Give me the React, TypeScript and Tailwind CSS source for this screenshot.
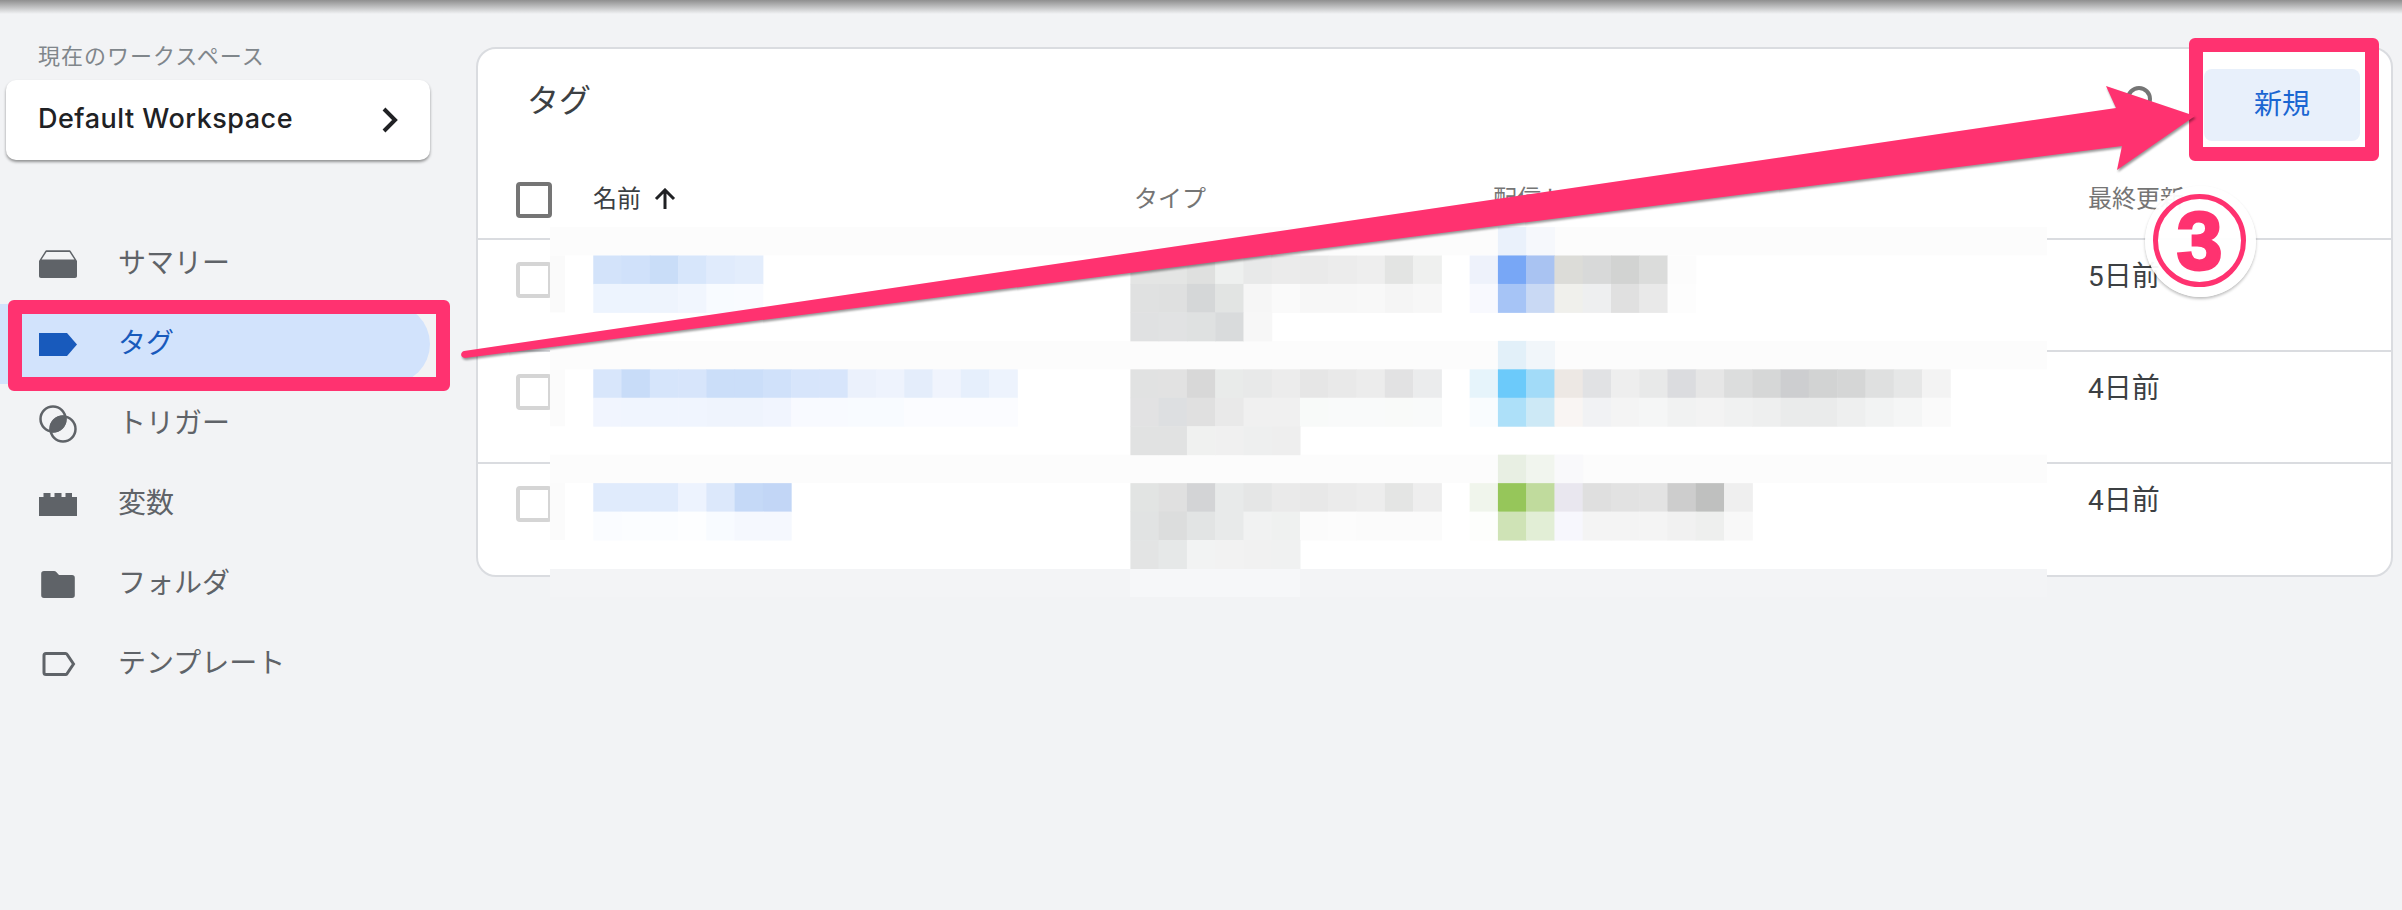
import React from 'react';

// Mosaic cell geometry: x = 565 + 28.27 * k, y = 227 + 28.46 * r (origin moved to overlay at 550,227)
const CELL_W = 28.27;
const CELL_H = 28.46;

type Run = [r: number, k: number, colors: string[]];

const mosaic: Run[] = [
  // faint strips above every row
  [0, 33, ['#eaf1fb', '#f6f8fc']],
  [4, 33, ['#e2f0f9', '#f1f6fa']],
  [8, 33, ['#e8efe3', '#f1f5ee', '#f9f9fb']],
  // tag names
  [1, 1, ['#d3e3fa', '#d0e1fa', '#c9ddf8', '#d7e6fb', '#e0ebfc', '#e3edfc']],
  [2, 1, ['#edf4fe', '#edf4fe', '#eef4fd', '#f1f6fe', '#f8fbff', '#f9fbff']],
  [5, 1, ['#d8e6fb', '#c8dcf8', '#d6e5fb', '#d7e5fb', '#cbdef9', '#cbdef9', '#d0e1fa', '#d7e5fb', '#d7e5fb', '#ebf1fc', '#eef3fd', '#e4edfb', '#f0f4fd', '#e6effc', '#edf3fd']],
  [6, 1, ['#f1f5fe', '#f0f5fe', '#f0f5fe', '#f0f5fe', '#eff4fd', '#eff4fd', '#f1f5fe', '#f8faff', '#f8faff', '#f8fbff', '#f8fbff', '#fbfcff', '#fbfcff', '#fbfcff', '#fbfcff']],
  [9, 1, ['#e0ebfc', '#e0ebfc', '#e0ebfc', '#edf3fe', '#dce8fb', '#c5d9f7', '#c2d6f6']],
  [10, 1, ['#fafcff', '#fbfdff', '#fbfdff', '#fdfeff', '#f8fbff', '#f5f8fe', '#f5f8fe']],
  // tag types
  [1, 20, ['#e4e5e4', '#e4e5e4', '#dfe0df', '#eef0ef', '#e8e9e9', '#ebebeb', '#eaeaea', '#ececec', '#eeeeee', '#e3e4e3', '#eff0ef']],
  [2, 20, ['#e0e1e1', '#dfe0e0', '#d5d7d8', '#e2e4e3', '#f6f6f6', '#fafafa', '#f7f7f7', '#f7f7f7', '#f8f8f8', '#f5f5f5', '#f7f7f7']],
  [3, 20, ['#e0e1e2', '#e1e2e3', '#dfe1e1', '#d9dbdc', '#f7f7f7']],
  [5, 20, ['#e1e2e2', '#e2e2e2', '#d8d8d8', '#e9ebea', '#e8e9e9', '#ececec', '#e6e6e6', '#e9e9e9', '#ececec', '#e2e2e3', '#ebeced']],
  [6, 20, ['#e2e2e3', '#dddfe1', '#e0e0e0', '#e9e9e9', '#f0f0f0', '#f0f0f0', '#f8faf9', '#f9fafa', '#f9fafa', '#f9faf9', '#f9fafa']],
  [7, 20, ['#e1e2e2', '#e1e2e2', '#f0f1f0', '#f0f0f0', '#eeefef', '#eeeeee']],
  [9, 20, ['#e2e4e3', '#e0e0e0', '#d3d4d6', '#e8eaea', '#e5e6e6', '#eaeaea', '#e8e8e8', '#ebebeb', '#ededed', '#e4e5e4', '#eeeeee']],
  [10, 20, ['#e1e3e3', '#dcdddd', '#e2e4e4', '#e8eaea', '#f1f2f2', '#eff1f0', '#fbfbfb', '#fcfcfc', '#fbfbfb', '#fbfbfb', '#fbfbfb']],
  [11, 20, ['#e3e4e4', '#e6e8e8', '#f2f3f3', '#f2f2f2', '#f1f1f1', '#f0f1f1']],
  // firing triggers
  [1, 32, ['#eef2fb', '#78a7f6', '#a9c3f2', '#dcdcd8', '#d8d9d9', '#d2d3d2', '#dbdcdb', '#fcfcfc']],
  [2, 32, ['#f8f9fe', '#a6c4f6', '#c9d9f4', '#f0f0ec', '#eeeff0', '#e0e0e0', '#e9e9e9', '#fdfdfd']],
  [5, 32, ['#e6f4fb', '#6ccafa', '#a2dbf8', '#ede8e4', '#e1e2e4', '#eeeeee', '#e8e9e9', '#dbdcdf', '#e6e6e6', '#dcdddd', '#d6d7d7', '#cdced0', '#d2d3d3', '#d5d6d6', '#dfe0e0', '#e6e7e7', '#f3f3f3']],
  [6, 32, ['#f9fcfe', '#ade0f9', '#cde9f6', '#f9f5f3', '#f1f2f4', '#f4f4f4', '#f5f6f6', '#f1f2f2', '#f3f3f3', '#f0f1f1', '#eeefef', '#eaebeb', '#eaebeb', '#eeefef', '#f2f3f3', '#f5f6f6', '#fafafa']],
  [9, 32, ['#f0f5ec', '#96c65a', '#c0db9d', '#e9e7ef', '#dfdfdf', '#e2e2e2', '#e3e3e3', '#cdcdcd', '#bfc0bf', '#efefef']],
  [10, 32, ['#fdfefc', '#cfe3b6', '#e2eed6', '#f7f7fd', '#f4f4f4', '#f4f4f4', '#f4f4f4', '#f1f1f1', '#eeefee', '#f8f8f8']],
];

function Mosaic() {
  return (
    <svg className="absolute left-[550px] top-[227px]" width={1497} height={370}>
      <rect x={0} y={0} width={1497} height={342} fill="#ffffff" />
      <rect x={0} y={342} width={1497} height={28} fill="#f3f4f6" />
      <rect x={580} y={342} width={170} height={28} fill="#f6f7f9" />
      {[0, 4, 8].map(r => (
        <rect key={r} x={0} y={r * CELL_H} width={1497} height={CELL_H} fill="#fcfcfc" />
      ))}
      <rect x={0} y={CELL_H} width={15} height={CELL_H * 2} fill="#fafafa" />
      <rect x={0} y={CELL_H * 5} width={15} height={CELL_H * 2} fill="#fbfbfb" />
      <rect x={0} y={CELL_H * 9} width={15} height={CELL_H * 2} fill="#fbfbfb" />
      {mosaic.map(([r, k, colors]) =>
        colors.map((c, i) => (
          <rect
            key={`${r}-${k}-${i}`}
            x={15 + (k + i) * CELL_W}
            y={r * CELL_H}
            width={CELL_W + 0.5}
            height={CELL_H + 0.5}
            fill={c}
          />
        )),
      )}
    </svg>
  );
}

function SummaryIcon() {
  return (
    <svg width="38" height="28" viewBox="0 0 38 28" fill="#5f6368">
      <path d="M0 11 6 1.5C6.4.7 7 .3 8 .3h22c1 0 1.600.4 2 1.200L38 11v15c0 1.200-.8 2-2 2H2c-1.200 0-2-.8-2-2V11Zm2.600-1.500h32.800L30.500 2h-23L2.600 9.500Z" fillRule="evenodd" />
    </svg>
  );
}

function TagIcon() {
  return (
    <svg width="38" height="23" viewBox="0 0 38 23" fill="#185abc">
      <path d="M0 0h28l10 11.500L28 23H0Z" />
    </svg>
  );
}

function TriggerIcon() {
  return (
    <svg width="38" height="38" viewBox="0 0 38 38" fill="none">
      <defs>
        <clipPath id="trigger-lens">
          <circle cx="14" cy="14" r="13.500" />
        </clipPath>
      </defs>
      <circle cx="24" cy="24" r="13.500" fill="#5f6368" clipPath="url(#trigger-lens)" />
      <circle cx="14" cy="14" r="12.500" stroke="#5f6368" strokeWidth="2.500" />
      <circle cx="24" cy="24" r="12.500" stroke="#5f6368" strokeWidth="2.500" />
    </svg>
  );
}

function VariableIcon() {
  return (
    <svg width="38" height="23" viewBox="0 0 38 23" fill="#5f6368">
      <path d="M0 4h4.500V0h7v4h4V0h7v4h4V0h6.500v4H38v19H0Z" />
    </svg>
  );
}

function FolderIcon() {
  return (
    <svg width="38" height="27" viewBox="0 0 38 27" fill="#5f6368">
      <path d="M5 0h10c1 0 1.700.4 2.300 1l2.700 3h13c1.800 0 2.800 1 2.800 2.800v17.400c0 1.800-1 2.800-2.800 2.800H5c-1.800 0-2.800-1-2.800-2.800V2.800C2.200 1 3.200 0 5 0Z" />
    </svg>
  );
}

function TemplateIcon() {
  return (
    <svg width="38" height="24" viewBox="0 0 38 24" fill="none">
      <path d="M7 1.500h19.500c.6 0 1.200.3 1.500.8l6.500 9.700-6.500 9.700c-.3.500-.9.800-1.500.8H7c-1.200 0-2-.8-2-2V3.500c0-1.200.8-2 2-2Z" stroke="#5f6368" strokeWidth="3" />
    </svg>
  );
}

const navItems = [
  { label: 'サマリー', icon: <SummaryIcon /> },
  { label: 'タグ', icon: <TagIcon />, active: true },
  { label: 'トリガー', icon: <TriggerIcon /> },
  { label: '変数', icon: <VariableIcon /> },
  { label: 'フォルダ', icon: <FolderIcon /> },
  { label: 'テンプレート', icon: <TemplateIcon /> },
];

function Sidebar() {
  return (
    <aside className="w-[476px] shrink-0">
      <div className="pl-[38px] pt-[28px] text-[22px] leading-[30px] tracking-[1px] text-[#80868b]">現在のワークスペース</div>
      <div className="ml-[6px] mt-[8px] flex h-[80px] w-[424px] items-center justify-between rounded-[10px] bg-white pl-[32px] pr-[32px] shadow-[0_2px_3px_rgba(0,0,0,0.4)]">
        <span className="-mt-[1px] font-['Inter',sans-serif] text-[27px] font-medium tracking-[0.5px] text-[#202124]">Default Workspace</span>
        <svg width="16" height="26" viewBox="0 0 16 26" fill="none">
          <path d="M2 2l11 11L2 24" stroke="#202124" strokeWidth="4" />
        </svg>
      </div>
      <nav className="mt-[64px]">
        {navItems.map(item => (
          <div
            key={item.label}
            className={`flex h-[80px] w-[430px] items-center rounded-r-[40px] pl-[39px] ${item.active ? 'bg-[#d2e3fc] text-[#185abc]' : 'text-[#5f6368]'}`}
          >
            <span className="flex w-[79px] shrink-0 items-center">{item.icon}</span>
            <span className="-mt-[1px] text-[28px] leading-none">{item.label}</span>
          </div>
        ))}
      </nav>
    </aside>
  );
}

function Checkbox({ dark }: { dark?: boolean }) {
  return <div className={`h-[36px] w-[36px] rounded-[4px] border-[4px] ${dark ? 'border-[#757575]' : 'border-[#d5d5d5]'}`} />;
}

const gridCols = 'grid grid-cols-[115px_541px_359px_595px_1fr]';

function TagTable() {
  return (
    <section className="mr-[9px] mt-[33px] h-[530px] flex-1 rounded-[20px] border-2 border-[#dadce0] bg-white">
      <div className="flex h-[112px] items-center justify-between pl-[49px] pr-[31px]">
        <h1 className="-mt-[9px] text-[32px] font-normal text-[#3c4043]">タグ</h1>
        <div className="flex items-center gap-[49px]">
          <svg width="30" height="40" viewBox="0 0 30 40" fill="none">
            <circle cx="14" cy="14" r="11" stroke="#757575" strokeWidth="4" />
          </svg>
          <button className="h-[72px] w-[156px] rounded-[8px] bg-[#e8f0fb] text-[28px] text-[#1a66d2]">新規</button>
        </div>
      </div>
      <div className={`${gridCols} h-[77px] text-[24px]`}>
        <div className="pl-[38px] pt-[21px]">
          <Checkbox dark />
        </div>
        <div className="flex items-center gap-[13px] pb-[2px] text-[#3c4043]">
          名前
          <svg width="22" height="22" viewBox="0 0 22 22" fill="none">
            <path d="M11 21V2M2 11l9-9 9 9" stroke="#202124" strokeWidth="3" />
          </svg>
        </div>
        <div className="flex items-center pb-[2px] text-[#757575]">タイプ</div>
        <div className="flex items-center pb-[2px] text-[#757575]">配信トリガー</div>
        <div className="flex items-center pb-[2px] text-[#757575]">最終更新</div>
      </div>
      {['5日前', '4日前', '4日前'].map((age, i) => (
        <div key={i} className={`${gridCols} h-[112px] border-t-2 border-[#dadce0]`}>
          <div className="pl-[38px] pt-[22px]">
            <Checkbox />
          </div>
          <div />
          <div />
          <div />
          <div className="pt-[19px] text-[28px] leading-[36px] text-[#3c4043]">{age}</div>
        </div>
      ))}
    </section>
  );
}

function Annotations() {
  return (
    <>
      <div className="absolute left-[8px] top-[300px] h-[91px] w-[442px] rounded-[6px] border-[14px] border-[#ff3270]" />
      <div className="absolute left-[2189px] top-[38px] h-[123px] w-[190px] rounded-[6px] border-[14px] border-[#ff3270]" />
      <svg className="absolute left-0 top-0 drop-shadow-[1px_2px_1px_rgba(0,0,0,0.4)]" width={2402} height={400}>
        <path
          d="M464 351 2116 108 2106 86 2195 116 2117 170 2122 146 465 358C460 358 460 352 464 351Z"
          fill="#ff3270"
        />
      </svg>
      <div className="absolute left-[2145px] top-[186px] flex h-[111px] w-[111px] rounded-full bg-white/95 shadow-[0_2px_3px_rgba(0,0,0,0.25)]">
        <div className="ml-[8px] mt-[8px] flex h-[93px] w-[93px] items-center justify-center rounded-full border-[5px] border-[#ff3270] font-['Liberation_Sans',sans-serif] text-[82px] font-bold leading-none text-[#ff3270] [-webkit-text-stroke:3px_#ff3270]">
          3
        </div>
      </div>
    </>
  );
}

export default function App() {
  return (
    <div className="relative h-[910px] w-[2402px] overflow-hidden bg-[#f2f3f5] font-['Roboto','Noto_Sans_CJK_JP',sans-serif]">
      <div className="h-[14px] bg-gradient-to-b from-[#8f8f8f] to-[#f2f3f5]" />
      <div className="flex">
        <Sidebar />
        <TagTable />
      </div>
      <Mosaic />
      <Annotations />
    </div>
  );
}
